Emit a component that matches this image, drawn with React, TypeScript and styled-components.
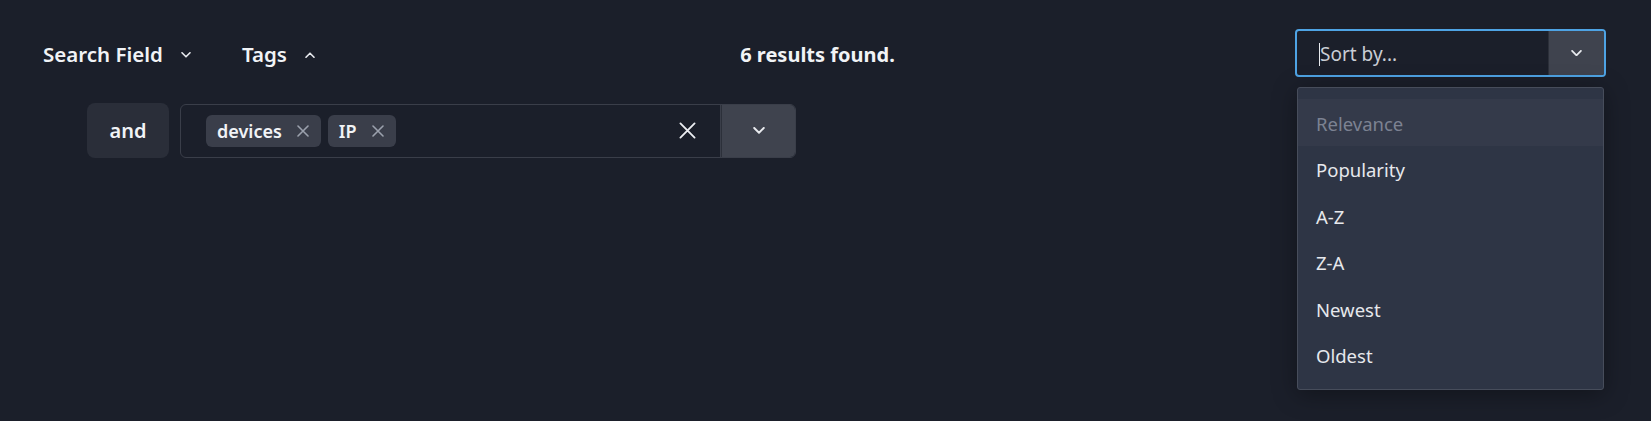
import React from "react";
import styled, { createGlobalStyle } from "styled-components";

const colors = {
  page: "#1b1f2a",
  text: "#f1f3f6",
  muted: "#7c8292",
  block: "#2a2e39",
  chip: "#3a3e4a",
  toggle: "#3f434e",
  line: "#3a3e49",
  menu: "#2e3545",
  menuActive: "#343a4a",
  menuBorder: "#474d5b",
  focus: "#4ea3e4",
};

const GlobalStyle = createGlobalStyle`
  html, body {
    margin: 0;
    padding: 0;
    background: ${colors.page};
    color: ${colors.text};
    font-family: "Noto Sans", "Open Sans", sans-serif;
  }
  * { box-sizing: border-box; }
`;

const Page = styled.div`
  width: 1651px;
  height: 421px;
  padding: 29px 45px 0 43px;
  display: flex;
  flex-direction: column;
  gap: 26px;
`;

const Header = styled.div`
  display: grid;
  grid-template-columns: 1fr auto 1fr;
  align-items: center;
  height: 48px;
`;

const Filters = styled.div`
  display: flex;
  align-items: center;
  gap: 51px;
  padding-top: 3px;
`;

const FilterToggle = styled.div`
  display: flex;
  align-items: center;
  gap: 18px;
  font-size: 20.5px;
  font-weight: 600;
  line-height: 1;
`;

const ResultCount = styled.div`
  font-size: 20px;
  font-weight: 700;
  margin-right: 14px;
  padding-top: 3px;
`;

const SortWrap = styled.div`
  justify-self: end;
  position: relative;
`;

const SortBox = styled.div`
  width: 311px;
  height: 48px;
  border: 2px solid ${colors.focus};
  border-radius: 4px;
  display: flex;
  overflow: hidden;
`;

const SortInput = styled.div`
  flex: 1;
  display: flex;
  align-items: center;
  padding-left: 22px;
  padding-top: 2px;
  font-size: 19px;
  color: #c9cdd5;
`;

const Caret = styled.span`
  display: inline-block;
  width: 1px;
  height: 23px;
  background: #e8eaee;
`;

const Toggle = styled.div<{ $width: number }>`
  width: ${(p) => p.$width}px;
  background: ${colors.toggle};
  border-left: 1px solid #2c303a;
  display: flex;
  align-items: center;
  justify-content: center;
`;

const Menu = styled.ul`
  position: absolute;
  top: 58px;
  left: 2px;
  width: 307px;
  margin: 0;
  padding: 11px 0;
  list-style: none;
  background: ${colors.menu};
  border: 1px solid ${colors.menuBorder};
  border-radius: 3px;
  box-shadow: 0 4px 24px rgba(0, 0, 0, 0.35);
`;

const MenuItem = styled.li<{ $active?: boolean }>`
  height: 46.5px;
  display: flex;
  align-items: center;
  padding-left: 18px;
  padding-top: 2px;
  font-size: 18.5px;
  color: ${(p) => (p.$active ? colors.muted : "#e6e8ec")};
  background: ${(p) => (p.$active ? colors.menuActive : "transparent")};
`;

const QueryRow = styled.div`
  display: flex;
  align-items: center;
  gap: 11px;
  padding-left: 44px;
`;

const Operator = styled.div`
  width: 82px;
  height: 55px;
  border-radius: 8px;
  background: ${colors.block};
  display: flex;
  align-items: center;
  justify-content: center;
  font-size: 20px;
  font-weight: 600;
`;

const TagInput = styled.div`
  width: 616px;
  height: 54px;
  border: 1px solid ${colors.line};
  border-radius: 6px;
  display: flex;
  overflow: hidden;
`;

const TagList = styled.div`
  flex: 1;
  display: flex;
  align-items: center;
  gap: 7px;
  padding-left: 25px;
`;

const Chip = styled.div`
  height: 32px;
  border-radius: 6px;
  background: ${colors.chip};
  display: flex;
  align-items: center;
  gap: 15px;
  padding: 0 12px 0 11px;
  font-size: 18px;
  font-weight: 600;
`;

const Clear = styled.div`
  width: 70px;
  display: flex;
  align-items: center;
  justify-content: flex-end;
  padding-right: 24px;
  border-right: 1px solid ${colors.line};
`;

const Chevron = ({ up, size = 10 }: { up?: boolean; size?: number }) => (
  <svg width={size} height={size * 0.6} viewBox="0 0 10 6" fill="none">
    <path
      d={up ? "M1 5.2 5 1.2l4 4" : "M1 .8l4 4 4-4"}
      stroke="#e8eaee"
      strokeWidth="1.6"
      strokeLinecap="round"
      strokeLinejoin="round"
    />
  </svg>
);

const Cross = ({ size, color, weight }: { size: number; color: string; weight: number }) => (
  <svg width={size} height={size} viewBox="0 0 12 12" fill="none">
    <path d="M1 1l10 10M11 1 1 11" stroke={color} strokeWidth={weight} strokeLinecap="round" />
  </svg>
);

const sortOptions = ["Relevance", "Popularity", "A-Z", "Z-A", "Newest", "Oldest"];
const tags = ["devices", "IP"];

export default function App() {
  return (
    <>
      <GlobalStyle />
      <Page>
        <Header>
          <Filters>
            <FilterToggle>
              Search Field <Chevron />
            </FilterToggle>
            <FilterToggle>
              Tags <Chevron up />
            </FilterToggle>
          </Filters>
          <ResultCount>6 results found.</ResultCount>
          <SortWrap>
            <SortBox>
              <SortInput>
                <Caret />
                Sort by...
              </SortInput>
              <Toggle $width={56}>
                <Chevron size={11} />
              </Toggle>
            </SortBox>
            <Menu>
              {sortOptions.map((opt, i) => (
                <MenuItem key={opt} $active={i === 0}>
                  {opt}
                </MenuItem>
              ))}
            </Menu>
          </SortWrap>
        </Header>
        <QueryRow>
          <Operator>and</Operator>
          <TagInput>
            <TagList>
              {tags.map((t) => (
                <Chip key={t}>
                  {t}
                  <Cross size={12} color="#9ba1ad" weight={1.6} />
                </Chip>
              ))}
            </TagList>
            <Clear>
              <Cross size={17} color="#eceef2" weight={1.3} />
            </Clear>
            <Toggle $width={74}>
              <Chevron size={12} />
            </Toggle>
          </TagInput>
        </QueryRow>
      </Page>
    </>
  );
}
